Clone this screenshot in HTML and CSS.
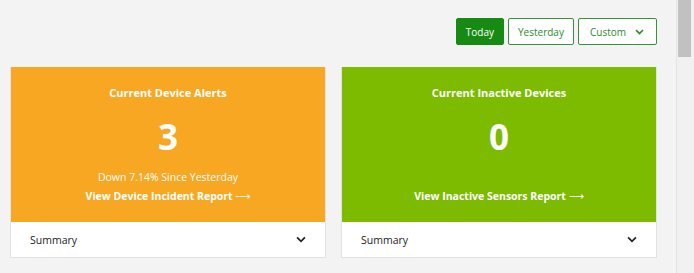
FILE: index.html
```html
<!DOCTYPE html>
<html lang="en">
  <head>
    <meta charset="UTF-8" />
    <meta name="viewport" content="width=device-width, initial-scale=1.0" />
    <title>Device Dashboard</title>
    <link rel="stylesheet" href="styles.css">
  </head>
  <body>
    <div class="app">
      <div class="main">
        <div class="toolbar">
          <button class="range active">Today</button>
          <button class="range">Yesterday</button>
          <button class="range custom">
            Custom
            <svg class="chev" width="9" height="6" viewBox="0 0 9 6"><path d="M1 1l3.5 3.5 3.5-3.5" fill="none" stroke="currentColor" stroke-width="1.7"/></svg>
          </button>
        </div>

        <div class="cards">
          <div class="card">
            <div class="card-body alerts">
              <div class="card-title">Current Device Alerts</div>
              <div class="card-value">3</div>
              <div class="card-foot">
                <div class="card-sub">Down 7.14% Since Yesterday</div>
                <a class="card-link" href="#">View Device Incident Report <span class="arrow">⟶</span></a>
              </div>
            </div>
            <div class="summary">
              <span>Summary</span>
              <svg class="chev" width="11" height="7" viewBox="0 0 11 7"><path d="M1.2 1.2l4.3 4.3 4.3-4.3" fill="none" stroke="currentColor" stroke-width="2"/></svg>
            </div>
          </div>

          <div class="card">
            <div class="card-body inactive">
              <div class="card-title">Current Inactive Devices</div>
              <div class="card-value">0</div>
              <div class="card-foot">
                <a class="card-link" href="#">View Inactive Sensors Report <span class="arrow">⟶</span></a>
              </div>
            </div>
            <div class="summary">
              <span>Summary</span>
              <svg class="chev" width="11" height="7" viewBox="0 0 11 7"><path d="M1.2 1.2l4.3 4.3 4.3-4.3" fill="none" stroke="currentColor" stroke-width="2"/></svg>
            </div>
          </div>
        </div>
      </div>

      <div class="scrollbar">
        <div class="thumb"></div>
      </div>
    </div>
  </body>
</html>
```

FILE: styles.css
```css
html, body {
  margin: 0;
  height: 100%;
}
body {
  font-family: 'Open Sans', 'Noto Sans', sans-serif;
  background: #f3f3f3;
  color: #222;
}
.app {
  display: flex;
  height: 100%;
}
.main {
  flex: 1;
  padding: 18px 19px 0 10px;
}
.toolbar {
  display: flex;
  justify-content: flex-end;
  gap: 4px;
  margin-bottom: 22px;
}
.range {
  height: 27px;
  padding: 0 9px;
  font-family: inherit;
  font-size: 10px;
  color: #2d8a2d;
  background: #fff;
  border: 1px solid #3a8f3a;
  border-radius: 2px;
  display: flex;
  align-items: center;
  gap: 9px;
}
.range.active {
  background: #168a12;
  border-color: #168a12;
  color: #fff;
}
.custom {
  padding: 0 12px 0 11px;
}
.cards {
  display: grid;
  grid-template-columns: 316px 316px;
  gap: 15px;
}
.card {
  background: #fff;
  border: 1px solid #e2e2e2;
  border-top: none;
}
.card-body {
  height: 155px;
  display: flex;
  flex-direction: column;
  align-items: center;
  color: #fff;
  box-sizing: border-box;
  padding: 18px 0 16px;
}
.alerts {
  background: #f8a722;
}
.inactive {
  background: #7cbb00;
}
.card-title {
  font-size: 11px;
  font-weight: bold;
}
.card-value {
  font-size: 35px;
  font-weight: bold;
  line-height: 48px;
  margin-top: 13px;
}
.card-foot {
  margin-top: auto;
  text-align: center;
  font-size: 10.5px;
  line-height: 19px;
}
.card-link {
  color: #fff;
  font-weight: bold;
  text-decoration: none;
}
.arrow {
  font-family: 'DejaVu Sans', sans-serif;
  font-weight: normal;
}
.summary {
  height: 35px;
  display: flex;
  align-items: center;
  justify-content: space-between;
  padding: 0 19px 0 19px;
  font-size: 10.5px;
}
.summary .chev {
  width: 10px;
}
.scrollbar {
  width: 17px;
  border-left: 1px solid #e4e4e4;
  background: #f1f1f1;
  padding-left: 1px;
}
.thumb {
  width: 13px;
  height: 57px;
  background: #c1c1c1;
}
```
